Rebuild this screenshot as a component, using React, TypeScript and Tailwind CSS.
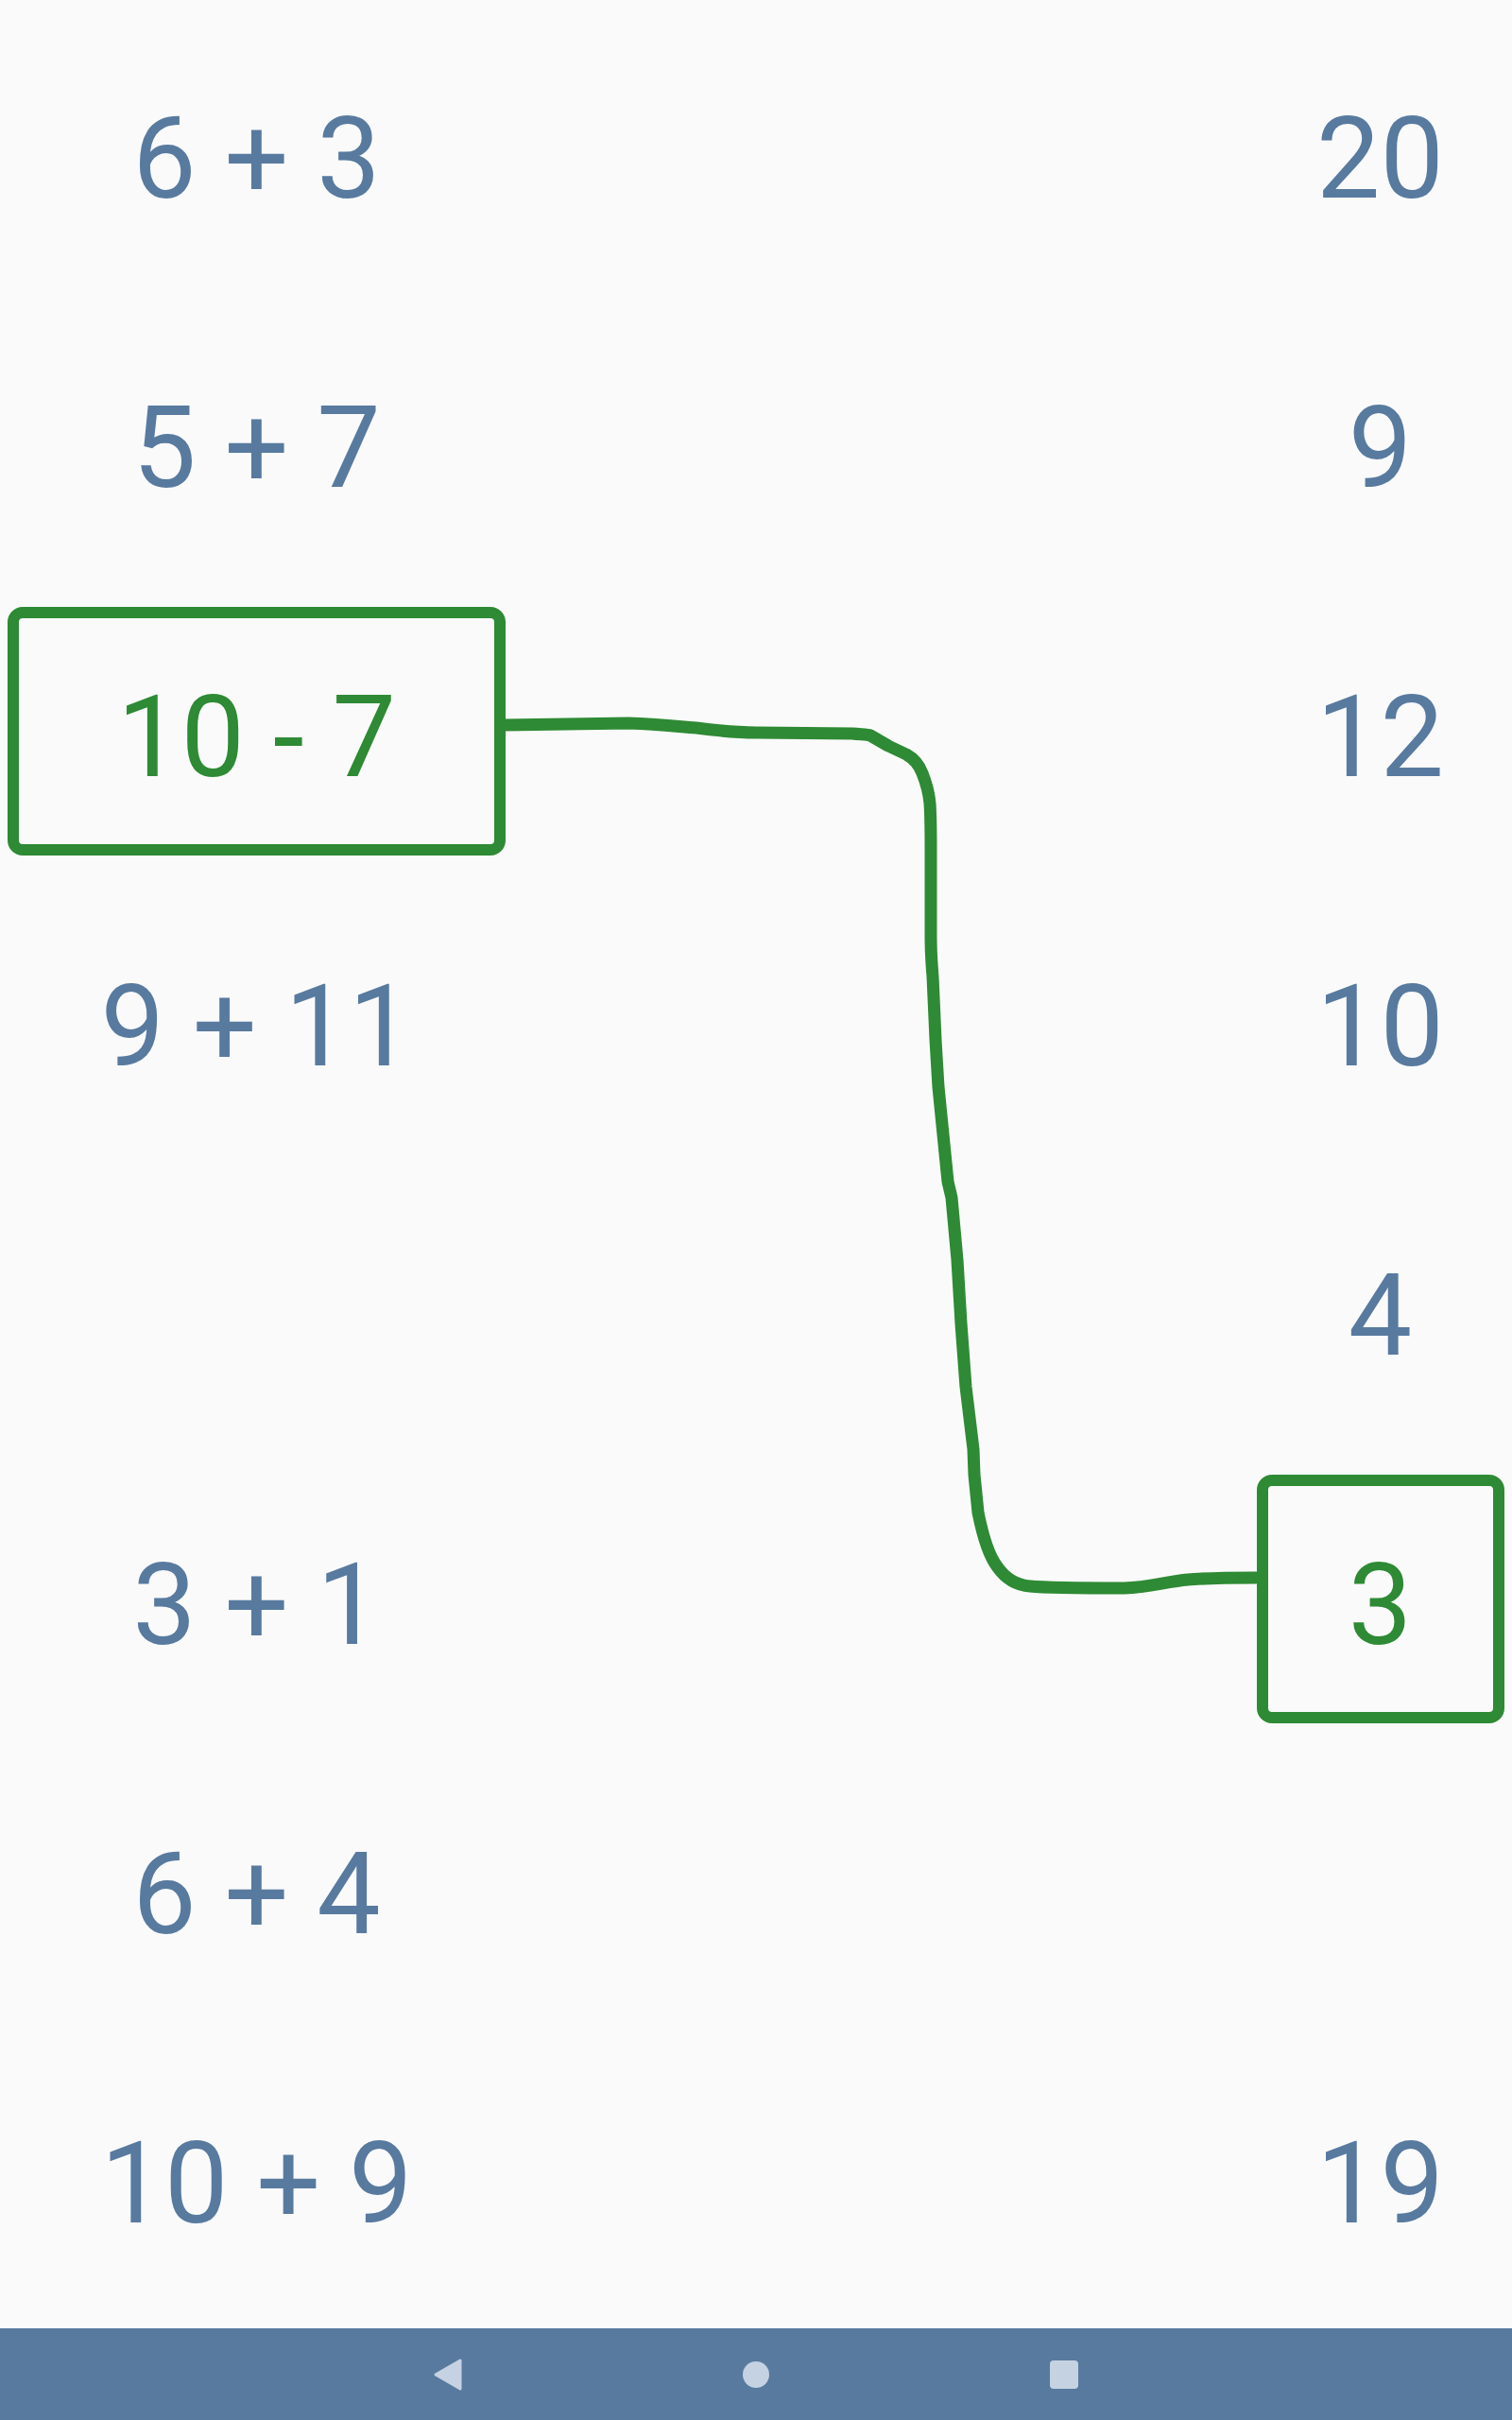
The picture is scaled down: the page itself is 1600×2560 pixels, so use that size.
import React from 'react';

type Cell = { text: string; picked?: boolean } | null;

const left: Cell[] = [
  { text: '6 + 3' },
  { text: '5 + 7' },
  { text: '10 - 7', picked: true },
  { text: '9 + 11' },
  null,
  { text: '3 + 1' },
  { text: '6 + 4' },
  { text: '10 + 9' },
];

const right: Cell[] = [
  { text: '20' },
  { text: '9' },
  { text: '12' },
  { text: '10' },
  { text: '4' },
  { text: '3', picked: true },
  null,
  { text: '19' },
];

const CellView = ({ cell, boxWidth }: { cell: Cell; boxWidth: string }) => (
  <div className="h-[306px] flex items-center justify-center">
    {cell &&
      (cell.picked ? (
        <div
          className={`${boxWidth} h-[263px] mb-[8px] pt-[14px] border-[12px] border-[#2e8a34] rounded-[16px] flex items-center justify-center text-[#2e8a34]`}
        >
          {cell.text}
        </div>
      ) : (
        <span className="pt-[6px]">{cell.text}</span>
      ))}
  </div>
);

export default function App() {
  return (
    <div
      className="relative w-[1600px] h-[2560px] bg-[#fafafa] flex flex-col overflow-hidden"
      style={{ fontFamily: 'Roboto, "Noto Sans", sans-serif' }}
    >
      <main className="flex-1 flex pt-[12px] text-[120px] leading-none text-[#587a9f]">
        <div className="w-[543px] flex flex-col">
          {left.map((c, i) => (
            <CellView key={i} cell={c} boxWidth="w-[527px]" />
          ))}
        </div>
        <div className="flex-1" />
        <div className="w-[279px] flex flex-col">
          {right.map((c, i) => (
            <CellView key={i} cell={c} boxWidth="w-[262px]" />
          ))}
        </div>
      </main>

      {/* drawn connection between the two picked cells */}
      <svg
        className="absolute inset-0 pointer-events-none"
        width={1600}
        height={2560}
        viewBox="0 0 1600 2560"
      >
        <path
          d="M534,767 L665,765 C700,766 720,769 737,770 C760,773 780,775 800,775 L902,776 C912,777 918,777 921,778 L940,789 L959,798 C968,803 973,810 976,818 C980,828 983,838 984,850 C985,865 985,880 985,900 L985,993 C985,1010 986,1020 987,1033 L990,1100 L993,1150 L1003,1250 L1007,1267 L1013,1333 L1017,1400 L1022,1467 L1030,1533 L1031,1560 L1035,1600 C1040,1625 1046,1645 1055,1657 C1064,1670 1075,1677 1090,1678 C1110,1680 1150,1680 1190,1680 C1215,1679 1235,1673 1257,1671 C1280,1669 1305,1669 1329,1669"
          fill="none"
          stroke="#2e8a34"
          strokeWidth={13}
          strokeLinecap="round"
          strokeLinejoin="round"
        />
      </svg>

      <footer className="h-[97px] bg-[#587a9f] flex items-center justify-center gap-[266px]">
        <div className="w-[60px] flex justify-center">
          <svg width="32" height="36" viewBox="0 0 32 36">
            <path d="M29,3 L29,33 L3,18 Z" fill="#c5d2e2" stroke="#c5d2e2" strokeWidth={3} strokeLinejoin="round" />
          </svg>
        </div>
        <div className="w-[60px] flex justify-center">
          <div className="w-[28px] h-[28px] rounded-full bg-[#c5d2e2]" />
        </div>
        <div className="w-[60px] flex justify-center">
          <div className="w-[30px] h-[30px] rounded-[4px] bg-[#c5d2e2]" />
        </div>
      </footer>
    </div>
  );
}
